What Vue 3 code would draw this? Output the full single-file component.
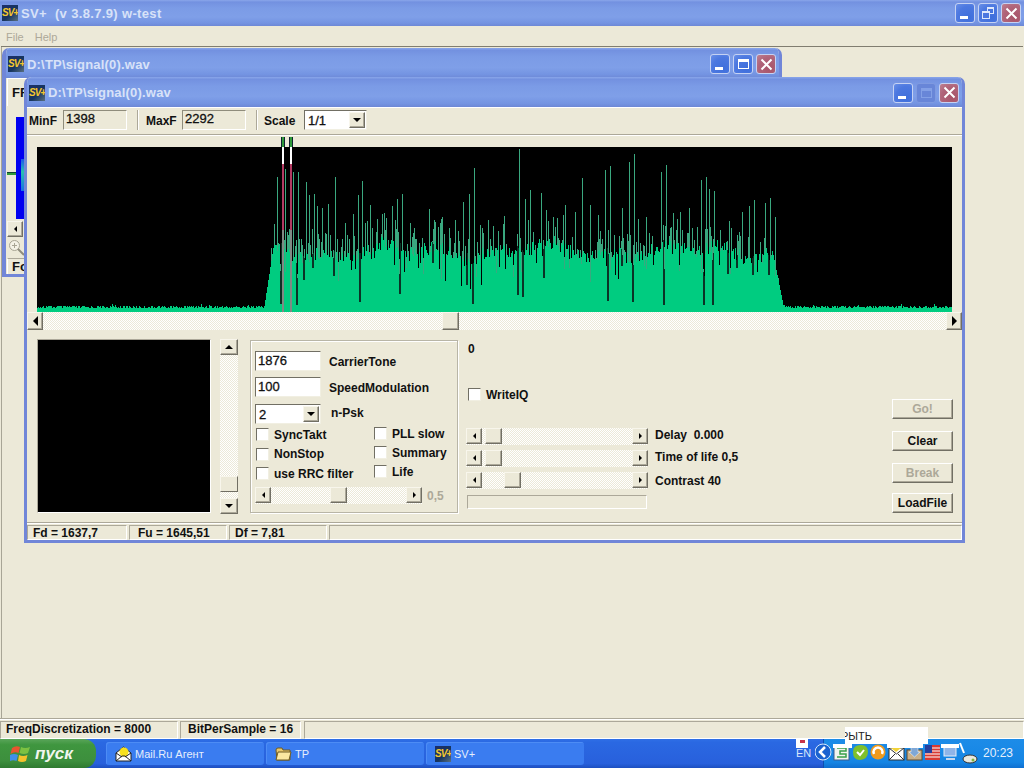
<script setup>
import { computed } from 'vue'

// spectrum is drawn column by column, x/y in page pixels minus chart origin (37,147)
const CHART_X = 37
const CHART_Y = 147
const BOTTOM = 165

const spikes = [
  [277,177],[285,169],[293,172],[298,172],[306,182],[309,195],[314,194],[317,206],[322,208],[328,204],
  [335,177],[345,223],[353,214],[358,195],[362,181],[370,205],[382,214],[392,206],[397,199],[402,194],
  [410,223],[429,209],[434,220],[441,219],[455,220],[463,202],[469,194],[474,168],[480,225],[488,220],
  [504,216],[519,149],[525,199],[530,190],[541,193],[546,210],[553,217],[565,205],[575,212],[582,178],
  [590,205],[598,215],[605,170],[610,166],[622,208],[629,162],[634,154],[638,219],[646,217],[661,172],
  [666,165],[673,213],[680,212],[689,208],[701,180],[706,177],[709,189],[714,191],[729,221],[742,212],
  [749,206],[754,200],[765,203],[770,198],[775,217],
]
const notches = [
  [280,304],[296,305],[303,280],[312,268],[333,276],[359,302],[399,294],[432,263],[466,285],[472,304],
  [517,295],[522,297],[543,278],[607,301],[621,266],[632,302],[663,305],[703,305],[712,305],[727,274],
  [736,268],[752,275],[768,275],
]

function rnd(i) {
  const s = Math.sin(i * 12.9898) * 43758.5453
  return s - Math.floor(s)
}

function massTop(x) {
  const i = x
  if (x < 264 || x > 783) return 307 + Math.round(rnd(i) * 3 - 1.5) - (rnd(i + 7) > 0.96 ? 2 : 0)
  let top = 251 + 5 * Math.sin(x / 23) + 4 * Math.sin(x / 9) + (rnd(i) - 0.5) * 14
  if (rnd(i + 90) > 0.9) top += 10 + rnd(i + 40) * 18
  if (x < 274) top = Math.max(top, 306 - (x - 264) * 6.5)
  if (x > 772) top = Math.max(top, 250 + (x - 772) * 5)
  return Math.round(top)
}

const paths = computed(() => {
  let mass = ''
  let dim = ''
  let dark = ''
  const spikeMap = new Map(spikes)
  // notches are two columns wide in the reference
  const notchMap = new Map(notches.flatMap(([x, y]) => [[x, y], [x + 1, y]]))
  for (let x = CHART_X; x < CHART_X + 915; x++) {
    const cx = x - CHART_X
    const top = massTop(x)
    const sp = spikeMap.get(x)
    const n = notchMap.get(x)
    const inBand = x >= 270 && x <= 778
    let grass = top
    if (inBand && rnd(x + 31) > 0.6) grass = top - Math.round(rnd(x + 3) * 26)
    if (sp) grass = sp
    if (n) {
      dark += `M${cx} ${top - CHART_Y}V${n - CHART_Y}h1V${top - CHART_Y}z`
      mass += `M${cx} ${n - CHART_Y}V${BOTTOM}h1V${n - CHART_Y}z`
    } else {
      mass += `M${cx} ${top - CHART_Y}V${BOTTOM}h1V${top - CHART_Y}z`
    }
    if (grass < top) dim += `M${cx} ${grass - CHART_Y}V${top - CHART_Y}h1V${grass - CHART_Y}z`
  }
  return { mass, dim, dark }
})

const cursors = [245, 253]

const rightBars = [
  { label: 'Delay  0.000', thumb: 19, width: 17 },
  { label: 'Time of life 0,5', thumb: 19, width: 17 },
  { label: 'Contrast 40', thumb: 38, width: 17 },
]
const leftChecks = ['SyncTakt', 'NonStop', 'use RRC filter']
const rightChecks = ['PLL slow', 'Summary', 'Life']
const buttons = [
  { label: 'Go!', off: true },
  { label: 'Clear', off: false },
  { label: 'Break', off: true },
  { label: 'LoadFile', off: false },
]
const tasks = [
  { label: 'Mail.Ru Агент', icon: 'mail' },
  { label: 'TP', icon: 'folder' },
  { label: 'SV+', icon: 'sv' },
]
</script>

<template>
  <div class="screen">
    <header class="app-title">
      <span class="sv-icon">SV+</span>
      <span class="title-text wide">SV+&nbsp; (v 3.8.7.9) w-test</span>
      <div class="caption-btns">
        <span class="cap min"><i></i></span>
        <span class="cap restore"><i></i><b></b></span>
        <span class="cap close">
          <svg width="13" height="13" viewBox="0 0 13 13"><path d="M1.5 1.5l10 10M11.5 1.5l-10 10" stroke="#fff" stroke-width="2"/></svg>
        </span>
      </div>
    </header>
    <nav class="menu"><span>File</span><span>Help</span></nav>

    <main class="mdi">
      <!-- back child window, mostly hidden behind the front one -->
      <section class="win back">
        <div class="win-title">
          <span class="sv-icon">SV+</span>
          <span class="title-text">D:\TP\signal(0).wav</span>
          <div class="caption-btns">
            <span class="cap min"><i></i></span>
            <span class="cap max"><i></i></span>
            <span class="cap close">
              <svg width="13" height="13" viewBox="0 0 13 13"><path d="M1.5 1.5l10 10M11.5 1.5l-10 10" stroke="#fff" stroke-width="2"/></svg>
            </span>
          </div>
        </div>
        <div class="back-body">
          <div class="ff-box">FF</div>
          <div class="back-plot">
            <span class="back-line"></span>
            <span class="back-blue"><em></em></span>
          </div>
          <span class="sb-btn arrow-left back-arrow"></span>
          <svg class="lens" width="17" height="17" viewBox="0 0 17 17">
            <circle cx="6.5" cy="6.5" r="5" fill="#f4f2e6" stroke="#a8a594"/>
            <path d="M4 6.5h5M6.5 4v5" stroke="#a8a594"/>
            <path d="M10 10l6 6" stroke="#8f8c7c" stroke-width="2"/>
          </svg>
          <div class="fo-box">Fo</div>
        </div>
      </section>

      <!-- front child window -->
      <section class="win front">
        <div class="win-title">
          <span class="sv-icon">SV+</span>
          <span class="title-text">D:\TP\signal(0).wav</span>
          <div class="caption-btns">
            <span class="cap min"><i></i></span>
            <span class="cap max disabled"><i></i></span>
            <span class="cap close">
              <svg width="13" height="13" viewBox="0 0 13 13"><path d="M1.5 1.5l10 10M11.5 1.5l-10 10" stroke="#fff" stroke-width="2"/></svg>
            </span>
          </div>
        </div>

        <div class="toolbar">
          <label class="tb-label l-min">MinF</label>
          <span class="readout">1398</span>
          <span class="tb-sep"></span>
          <label class="tb-label l-max">MaxF</label>
          <span class="readout">2292</span>
          <span class="tb-sep"></span>
          <label class="tb-label l-scale">Scale</label>
          <span class="combo scale"><span class="val">1/1</span><span class="sb-btn arrow-down combo-btn"></span></span>
        </div>

        <div class="chart-wrap">
          <div class="chart">
            <svg width="915" height="165" viewBox="0 0 915 165" shape-rendering="crispEdges">
              <path :d="paths.dim" fill="#3aa87f"/>
              <path :d="paths.dark" fill="#0b3326"/>
              <path :d="paths.mass" fill="#00cc80"/>
            </svg>
            <div v-for="c in cursors" :key="c" class="cursor" :style="{ left: c + 'px' }">
              <span class="c-green"></span>
              <span class="c-white"></span>
              <span class="c-red"></span>
              <span class="c-grey"></span>
            </div>
          </div>
        </div>
        <div class="hscroll main-scroll">
          <span class="sb-btn arrow-left big"></span>
          <span class="thumb" style="left: 415px"></span>
          <span class="sb-btn arrow-right big"></span>
        </div>

        <div class="lower">
          <div class="scope"></div>
          <div class="vscroll">
            <span class="sb-btn arrow-up"></span>
            <span class="v-track"><span class="v-thumb"></span></span>
            <span class="sb-btn arrow-down"></span>
          </div>

          <div class="group">
            <div class="field-row">
              <span class="input">1876</span><span class="lbl low">CarrierTone</span>
            </div>
            <div class="field-row">
              <span class="input">100</span><span class="lbl low">SpeedModulation</span>
            </div>
            <div class="field-row">
              <span class="combo npsk"><span class="val">2</span><span class="sb-btn arrow-down combo-btn"></span></span>
              <span class="lbl shift">n-Psk</span>
            </div>
            <div class="checks">
              <div class="check-col col-a">
                <div v-for="c in leftChecks" :key="c" class="check"><span class="box"></span>{{ c }}</div>
              </div>
              <div class="check-col col-b">
                <div v-for="c in rightChecks" :key="c" class="check"><span class="box"></span>{{ c }}</div>
              </div>
            </div>
            <div class="group-scroll">
              <div class="hscroll small">
                <span class="sb-btn arrow-left"></span>
                <span class="thumb" style="left: 75px"></span>
                <span class="sb-btn arrow-right"></span>
              </div>
              <span class="lbl off">0,5</span>
            </div>
          </div>

          <div class="right-col">
            <div class="zero">0</div>
            <div class="check writeiq"><span class="box"></span>WriteIQ</div>
            <div class="bars">
              <div v-for="b in rightBars" :key="b.label" class="bar-row">
                <div class="hscroll">
                  <span class="sb-btn arrow-left"></span>
                  <span class="thumb" :style="{ left: b.thumb + 'px', width: b.width + 'px' }"></span>
                  <span class="sb-btn arrow-right"></span>
                </div>
                <span class="lbl">{{ b.label }}</span>
              </div>
            </div>
            <div class="progress"></div>
          </div>

          <div class="btn-col">
            <button v-for="b in buttons" :key="b.label" class="btn" :class="{ off: b.off }">{{ b.label }}</button>
          </div>
        </div>

        <div class="win-status">
          <span class="cell c1">Fd = 1637,7</span>
          <span class="cell c2">Fu = 1645,51</span>
          <span class="cell c3">Df = 7,81</span>
          <span class="cell c4"></span>
        </div>
      </section>
    </main>

    <footer class="app-status">
      <span class="cell s1">FreqDiscretization = 8000</span>
      <span class="cell s2">BitPerSample = 16</span>
      <span class="cell s3"></span>
    </footer>

    <div class="taskbar">
      <div class="start">
        <svg width="22" height="20" viewBox="0 0 22 20">
          <path d="M2 4q4-3 8-1l-1.500 6q-4-2-8 1z" fill="#e8552f"/>
          <path d="M11 3q4 2 9 0l-2 6q-4 2-8.500 0z" fill="#7cc142"/>
          <path d="M0 11q4-2 8 0l-1.500 6q-4-2-8 1z" fill="#3f8fe8"/>
          <path d="M9 11q4 2 8.500 0l-1.500 6q-4 2-8 0z" fill="#f4c22b"/>
        </svg>
        <span>пуск</span>
      </div>
      <div class="tasks">
        <div v-for="t in tasks" :key="t.label" class="task">
          <svg v-if="t.icon === 'mail'" width="17" height="16" viewBox="0 0 17 16">
            <path d="M1 7l7.500-6 7.500 6v8H1z" fill="#fff" stroke="#222"/>
            <circle cx="9" cy="6" r="4.500" fill="#f7e11e"/>
            <path d="M1 15l6-5h3l6 5M1 7l6 4M16 7l-6 4" fill="none" stroke="#222"/>
          </svg>
          <svg v-else-if="t.icon === 'folder'" width="17" height="14" viewBox="0 0 17 14">
            <path d="M1 3q0-2 2-2h4l1 2h7v10H2z" fill="#e8c66a" stroke="#6d5a24"/>
            <path d="M3 5h13l-2 8H1z" fill="#fbe7a1" stroke="#6d5a24"/>
          </svg>
          <span v-else class="sv-icon">SV+</span>
          <span class="task-text">{{ t.label }}</span>
        </div>
      </div>
      <span class="lang">EN</span>
      <div class="tray">
        <svg width="152" height="20" viewBox="0 0 152 20" class="tray-icons">
          <circle cx="8" cy="10" r="8" fill="#1a62d0" stroke="#d7e8fb"/>
          <path d="M10 5l-5 5 5 5" fill="none" stroke="#fff" stroke-width="2.500"/>
          <rect x="19" y="3" width="15" height="15" fill="#f2f5ee" stroke="#3c5c8c"/>
          <path d="M22 6h9v3h-6v3h6v3h-9" fill="none" stroke="#39a04a" stroke-width="1.500"/>
          <path d="M38 10q0-7 8-7 7 0 7 7t-8 8q-7 0-7-8z" fill="#7fc02c"/>
          <path d="M42 10l3 3 4-5" fill="none" stroke="#fff" stroke-width="2"/>
          <circle cx="63" cy="10" r="7.500" fill="#f09a1c"/>
          <path d="M59 12a4.500 4.500 0 1 1 8 0" fill="none" stroke="#fff" stroke-width="2.500"/>
          <rect x="74" y="6" width="15" height="12" fill="#fff" stroke="#333"/>
          <path d="M74 6l7.500 6 7.500-6M74 18l6-6M89 18l-6-6" fill="none" stroke="#333"/>
          <path d="M76 6l5-4 5 4-5 4z" fill="#f2d33a"/>
          <rect x="92" y="8" width="15" height="10" fill="#c9b08a" stroke="#5c4a32"/>
          <path d="M96 4h7v6h2l-5.500 5L94 10h2z" fill="#7fa7d6" stroke="#fff" stroke-width=".5"/>
          <rect x="110" y="3" width="15" height="15" fill="#d83a32"/>
          <path d="M110 6h15M110 9h15M110 12h15M110 15h15" stroke="#fff"/>
          <rect x="110" y="3" width="7" height="8" fill="#273f9c"/>
          <rect x="129" y="5" width="12" height="9" fill="#8fb4e8" stroke="#e6eef8"/>
          <path d="M131 17h9" stroke="#c8d8ee" stroke-width="2"/>
          <path d="M145 1l4 10" stroke="#fff" stroke-width="2"/>
        </svg>
        <svg class="tray-mouse" width="18" height="14" viewBox="0 0 18 14">
          <ellipse cx="10" cy="9" rx="7" ry="4" fill="#e8e8e0" stroke="#333"/>
          <circle cx="13" cy="10" r="1.500" fill="#7fb53a"/>
        </svg>
        <span class="clock">20:23</span>
      </div>
    </div>

    <!-- leftover white patches from a menu that did not repaint over the tray -->
    <div class="ghost g1"><span>РЫТЬ</span></div>
    <div class="ghost g2"></div>
    <div class="ghost g3"></div>
    <div class="ghost g4"></div>
    <div class="ghost g5"><i></i></div>
  </div>
</template>

<style>
html, body { margin: 0; background: #ece9d8; }
</style>

<style scoped>
.screen {
  width: 1024px;
  height: 768px;
  position: relative;
  overflow: hidden;
  display: flex;
  flex-direction: column;
  background: #ece9d8;
  font-family: "Liberation Sans", Arial, sans-serif;
  font-size: 12px;
  font-weight: 700;
  color: #111;
}

/* title bars */
.app-title, .win-title {
  display: flex;
  align-items: center;
  background: linear-gradient(#8aa6ea 0, #7391e0 8%, #7b9be6 30%, #7f9fe8 65%, #7494e2 88%, #6d88d6 100%);
  flex-shrink: 0;
}
.app-title { height: 26px; padding: 0 3px 0 2px; }
.win-title { height: 30px; box-sizing: border-box; padding: 1px 6px 0 5px; }
.title-text {
  margin-left: 3px;
  font-size: 13px;
  color: #d8e2f8;
  white-space: pre;
  letter-spacing: 0.2px;
}
.title-text.wide { letter-spacing: 0.35px; }
.sv-icon {
  width: 16px;
  height: 16px;
  flex-shrink: 0;
  display: inline-block;
  overflow: hidden;
  background: linear-gradient(135deg, #1c2f6b, #16345e 55%, #5a7080);
  color: #f3c62e;
  font: italic 700 10px/16px "Liberation Sans", sans-serif;
  letter-spacing: -1px;
  text-align: center;
}
.caption-btns { margin-left: auto; display: flex; gap: 3px; }
.cap {
  width: 20px;
  height: 20px;
  box-sizing: border-box;
  border: 1px solid #c5d2f3;
  border-radius: 3px;
  position: relative;
  display: flex;
  align-items: center;
  justify-content: center;
  background: radial-gradient(circle at 70% 75%, #3f6fdc, #4c78e0 60%, #6a90e8);
}
.cap.close { background: radial-gradient(circle at 70% 75%, #a85468, #b0647a 60%, #bf8292); }
.cap.disabled { background: #6886d8; border-color: #7f9ae0; }
.cap.min i { position: absolute; left: 4px; bottom: 3px; width: 8px; height: 3px; background: #fff; }
.cap.max i { width: 11px; height: 10px; box-sizing: border-box; border: 1px solid #fff; border-top-width: 3px; }
.cap.max.disabled i { border-color: #83a0e6; }
.cap.restore i, .cap.restore b {
  position: absolute;
  box-sizing: border-box;
  border: 1px solid #dfe8fb;
  border-top-width: 2px;
}
.cap.restore i { width: 7px; height: 7px; right: 3px; top: 3px; }
.cap.restore b { width: 8px; height: 8px; left: 3px; bottom: 3px; background: #4c78e0; }

.menu {
  height: 20px;
  display: flex;
  align-items: center;
  gap: 11px;
  padding: 1px 0 0 6px;
  box-sizing: border-box;
  font-size: 11px;
  font-weight: 400;
  color: #aca899;
  flex-shrink: 0;
}

.mdi {
  flex: 1;
  position: relative;
  border-top: 1px solid #807d70;
  box-shadow: inset 1px 0 #a8a596;
  margin-right: 1px;
  margin-left: 1px;
}

/* child windows */
.win {
  position: absolute;
  box-sizing: border-box;
  border: solid #7186d8;
  border-width: 0 3px 3px 3px;
  border-radius: 7px 7px 0 0;
  background: #ece9d8;
  display: flex;
  flex-direction: column;
  overflow: hidden;
}
.back { left: 1px; top: 1px; width: 780px; height: 229px; border-left-width: 4px; }
.front { left: 23px; top: 30px; width: 941px; height: 466px; }
.win-title { border-radius: 7px 7px 0 0; margin: 0 -3px; }
.back .win-title { margin-left: -4px; padding-left: 6px; padding-top: 2px; }

.back-body { flex: 1; display: flex; flex-direction: column; align-items: flex-start; padding-left: 1px; }
.ff-box {
  width: 120px;
  height: 28px;
  box-sizing: border-box;
  border-top: 1px solid #fff;
  border-left: 1px solid #fff;
  padding: 6px 0 0 4px;
  font-size: 13px;
}
.back-plot { display: flex; align-items: center; margin-top: 11px; height: 102px; }
.back-line { width: 9px; height: 2px; background: #2f9a3a; border-top: 1px solid #143; margin-top: 10px; }
.back-blue { width: 120px; height: 102px; background: #0000f0; position: relative; }
.back-blue em {
  position: absolute;
  left: 5px;
  top: 42px;
  width: 6px;
  height: 32px;
  background: linear-gradient(#1b55ee, #28c3b0 40%, #1b70e4);
}
.back-arrow { margin-top: 2px; width: 15px; height: 14px; }
.lens { margin: 2px 0 0 1px; }
.fo-box {
  margin-top: 2px;
  width: 60px;
  height: 16px;
  box-sizing: border-box;
  border-top: 1px solid #aca899;
  border-left: 1px solid #fff;
  padding-left: 4px;
  font-size: 13px;
  line-height: 15px;
}

/* toolbar */
.toolbar {
  height: 28px;
  box-sizing: border-box;
  flex-shrink: 0;
  display: flex;
  align-items: center;
  padding: 0 0 2px 2px;
  border-top: 1px solid #fff;
  border-bottom: 1px solid #aca899;
  box-shadow: 0 1px #fff;
}
.tb-label { flex-shrink: 0; padding-top: 1px; }
.l-min { width: 34px; }
.l-max { width: 36px; }
.l-scale { width: 40px; margin-left: -1px; }
.readout {
  width: 64px;
  height: 20px;
  box-sizing: border-box;
  border: 1px solid;
  border-color: #8f8c7c #fff #fff #8f8c7c;
  padding-left: 2px;
  line-height: 16px;
  font-size: 13px;
  font-weight: 400;
  -webkit-text-stroke: 0.3px #111;
  background: #ece9d8;
}
.tb-sep {
  width: 1px;
  height: 20px;
  margin: 0 8px 0 10px;
  background: #aca899;
  box-shadow: 1px 0 #fff;
}

.combo {
  height: 20px;
  box-sizing: border-box;
  display: flex;
  align-items: center;
  justify-content: space-between;
  background: #fff;
  border: 1px solid;
  border-color: #716f64 #f1efe2 #f1efe2 #716f64;
  padding: 0 1px 0 3px;
}
.scale { width: 63px; }
.npsk { width: 66px; }
.combo-btn { width: 15px; height: 16px; }
.val { font-size: 13px; font-weight: 400; -webkit-text-stroke: 0.3px #111; }

/* chart */
.chart-wrap { padding: 12px 0 0 10px; flex-shrink: 0; }
.chart { width: 915px; height: 165px; background: #000; position: relative; }
.chart svg { display: block; }
.cursor {
  position: absolute;
  top: -10px;
  bottom: 0;
  width: 2px;
  display: flex;
  flex-direction: column;
}
.c-green { height: 10px; background: #2f9a3a; box-shadow: 1px 0 #123, -1px 0 #123; }
.c-white { height: 17px; background: #fff; }
.c-red { height: 66px; background: #b23a62; }
.c-grey { flex: 1; background: #7f8a84; }

/* scrollbars */
.sb-btn {
  box-sizing: border-box;
  display: inline-flex;
  align-items: center;
  justify-content: center;
  flex-shrink: 0;
  width: 16px;
  height: 16px;
  background: #ece9d8;
  border: 1px solid;
  border-color: #f8f6ec #716f64 #716f64 #f8f6ec;
  box-shadow: inset -1px -1px #aca899;
}
.sb-btn::after { content: ""; width: 0; height: 0; border: 3px solid transparent; }
.big::after { border-width: 5px; }
.arrow-left::after { border-right-color: #000; border-left-width: 0; }
.arrow-right::after { border-left-color: #000; border-right-width: 0; }
.arrow-up::after { border-width: 0 4px 4px; border-bottom-color: #000; }
.arrow-down::after { border-width: 4px 4px 0; border-top-color: #000; }

.hscroll {
  position: relative;
  height: 18px;
  box-sizing: border-box;
  display: flex;
  justify-content: space-between;
  align-items: flex-start;
  background: repeating-conic-gradient(#ece9d8 0 25%, #fff 0 50%) 0 0 / 2px 2px;
}
.hscroll .sb-btn { height: 16px; }
.thumb {
  position: absolute;
  top: 0;
  width: 17px;
  height: 16px;
  box-sizing: border-box;
  background: #ece9d8;
  border: 1px solid;
  border-color: #f8f6ec #716f64 #716f64 #f8f6ec;
  box-shadow: inset -1px -1px #aca899;
}
.main-scroll { flex-shrink: 0; }
.main-scroll .sb-btn, .main-scroll .thumb { height: 18px; }

.lower {
  flex: 1;
  display: flex;
  align-items: flex-start;
  padding: 9px 9px 0 10px;
  min-height: 0;
}
.scope {
  width: 174px;
  height: 174px;
  box-sizing: border-box;
  background: #000;
  border: 1px solid;
  border-color: #aca899 #fff #fff #aca899;
  flex-shrink: 0;
}
.vscroll {
  margin-left: 9px;
  width: 18px;
  height: 175px;
  display: flex;
  flex-direction: column;
  flex-shrink: 0;
}
.vscroll .sb-btn { width: 18px; }
.v-track {
  flex: 1;
  display: flex;
  align-items: flex-end;
  padding-bottom: 6px;
  background: repeating-conic-gradient(#ece9d8 0 25%, #fff 0 50%) 0 0 / 2px 2px;
}
.v-thumb {
  width: 18px;
  height: 16px;
  box-sizing: border-box;
  background: #ece9d8;
  border: 1px solid;
  border-color: #f8f6ec #716f64 #716f64 #f8f6ec;
}

/* centre group */
.group {
  margin: 1px 0 0 12px;
  width: 208px;
  height: 173px;
  box-sizing: border-box;
  flex-shrink: 0;
  border: 1px solid #b8b5a6;
  box-shadow: 1px 1px #fff, inset 1px 1px #fff;
  padding: 10px 0 0 4px;
  display: flex;
  flex-direction: column;
}
.field-row { display: flex; align-items: center; gap: 8px; height: 20px; margin-bottom: 6px; }
.field-row:nth-child(2) { margin-bottom: 7px; }
.shift { margin: -2px 0 0 2px; }
.input {
  width: 66px;
  height: 20px;
  box-sizing: border-box;
  background: #fff;
  border: 1px solid;
  border-color: #716f64 #f1efe2 #f1efe2 #716f64;
  padding-left: 2px;
  line-height: 17px;
  font-size: 13px;
  font-weight: 400;
  -webkit-text-stroke: 0.3px #111;
}
.lbl { white-space: pre; }
.lbl.low { padding-top: 2px; }
.lbl.off { color: #aca899; }
.checks { display: flex; height: 61px; margin-top: -5px; margin-bottom: -1px; }
.check-col { display: flex; flex-direction: column; justify-content: flex-start; }
.col-a { width: 119px; padding-left: 1px; box-sizing: border-box; }
.col-a .check { height: 19.5px; }
.col-b { margin-top: -1px; }
.col-b .check { height: 19px; }
.check { display: flex; align-items: center; white-space: pre; }
.box {
  width: 13px;
  height: 13px;
  margin-right: 5px;
  box-sizing: border-box;
  background: #fff;
  border: 1px solid;
  border-color: #716f64 #f1efe2 #f1efe2 #716f64;
  flex-shrink: 0;
}
.group-scroll { display: flex; align-items: center; gap: 5px; margin-top: 2px; }
.small { width: 167px; height: 17px; }

/* right column */
.right-col { margin-left: 8px; width: 300px; flex-shrink: 0; }
.zero { margin: 3px 0 0 2px; height: 15px; line-height: 15px; }
.writeiq { margin: 30px 0 0 2px; height: 15px; }
.bars { margin-top: 26px; display: flex; flex-direction: column; gap: 5px; }
.bar-row { display: flex; align-items: center; gap: 7px; height: 17px; }
.bar-row:not(:last-child) .lbl { margin-top: -3px; }
.bar-row .hscroll { width: 182px; height: 17px; flex-shrink: 0; }
.progress {
  margin: 6px 0 0 1px;
  width: 180px;
  height: 14px;
  box-sizing: border-box;
  border: 1px solid;
  border-color: #aca899 #fff #fff #aca899;
}

.btn-col {
  margin-left: auto;
  padding-top: 60px;
  display: flex;
  flex-direction: column;
  gap: 12px;
}
.btn {
  width: 61px;
  height: 20px;
  padding: 0;
  background: #ece9d8;
  border: 1px solid;
  border-color: #fff #716f64 #716f64 #fff;
  box-shadow: inset -1px -1px #aca899;
  font: 700 12px "Liberation Sans", Arial, sans-serif;
  color: #111;
}
.btn.off { color: #aca899; }
.btn:last-child { margin-top: -2px; }

/* status bars */
.win-status {
  height: 18px;
  box-sizing: border-box;
  flex-shrink: 0;
  display: flex;
  padding: 2px 0 0;
  border-top: 1px solid #aca899;
  box-shadow: inset 0 1px #fff;
}
.cell {
  box-sizing: border-box;
  height: 100%;
  padding-left: 5px;
  border: 1px solid;
  border-color: #aca899 #fff #fff #aca899;
  margin-right: 2px;
  white-space: pre;
  line-height: 14px;
}
.c1 { width: 100px; }
.c2 { width: 98px; padding-left: 8px; }
.c3 { width: 98px; }
.c4 { flex: 1; margin-right: 0; }

.app-status {
  height: 21px;
  box-sizing: border-box;
  flex-shrink: 0;
  display: flex;
  padding-top: 2px;
  border-top: 1px solid #aca899;
  box-shadow: inset 0 1px #fff;
}
.app-status .cell { line-height: 15px; }
.s1 { width: 178px; }
.s2 { width: 121px; margin-right: 3px; padding-left: 7px; }
.s3 { flex: 1; margin-right: 0; }

/* taskbar */
.taskbar {
  height: 29px;
  flex-shrink: 0;
  display: flex;
  align-items: center;
  position: relative;
  background: linear-gradient(#2f6fe6 0, #2a68e2 12%, #2860dc 85%, #1d4fc0 100%);
  color: #fff;
  font-weight: 400;
}
.start {
  width: 96px;
  height: 29px;
  box-sizing: border-box;
  display: flex;
  align-items: center;
  gap: 3px;
  padding-left: 10px;
  border-radius: 0 12px 12px 0;
  background: linear-gradient(#5aa55a, #3f963f 20%, #3d8f3d 75%, #2f7a30);
  font: italic 700 17px "Liberation Sans", Arial, sans-serif;
  color: #f2f6ee;
  flex-shrink: 0;
}
.tasks { display: flex; gap: 2px; margin-left: 10px; }
.task {
  width: 158px;
  height: 23px;
  box-sizing: border-box;
  display: flex;
  align-items: center;
  gap: 3px;
  padding-left: 9px;
  border-radius: 3px;
  background: #3a7cf0;
  box-shadow: inset 1px 1px #4d8cf5;
}
.task-text { font-size: 11px; color: #e6eefc; }
.lang { position: absolute; left: 796px; top: 8px; font-size: 11px; color: #dbe6fb; }
.tray {
  position: absolute;
  right: 0;
  top: 0;
  width: 201px;
  height: 100%;
  background: linear-gradient(#1d8ce8, #1585e4 80%, #0f6fd0);
  border-left: 1px solid #0e4fb0;
  box-sizing: border-box;
}
.tray-icons { position: absolute; left: -9px; top: 3px; }
.tray-mouse { position: absolute; left: 136px; top: 11px; }
.clock { position: absolute; left: 159px; top: 7px; font-size: 12px; color: #e6f0fc; }

/* white leftovers */
.ghost { position: absolute; background: #fff; }
.g1 { left: 845px; top: 727px; width: 83px; height: 17px; font: 400 11px/18px "Liberation Sans", sans-serif; color: #222; overflow: hidden; }
.g1 span { display: block; margin-left: -4px; }
.g2 { left: 887px; top: 744px; width: 36px; height: 4px; }
.g3 { left: 833px; top: 744px; width: 19px; height: 4px; }
.g4 { left: 941px; top: 744px; width: 18px; height: 4px; }
.g5 { left: 796px; top: 739px; width: 12px; height: 9px; }
.g5 i { display: block; width: 5px; height: 3px; margin: 1px 0 0 4px; background: #c8344a; }
</style>
